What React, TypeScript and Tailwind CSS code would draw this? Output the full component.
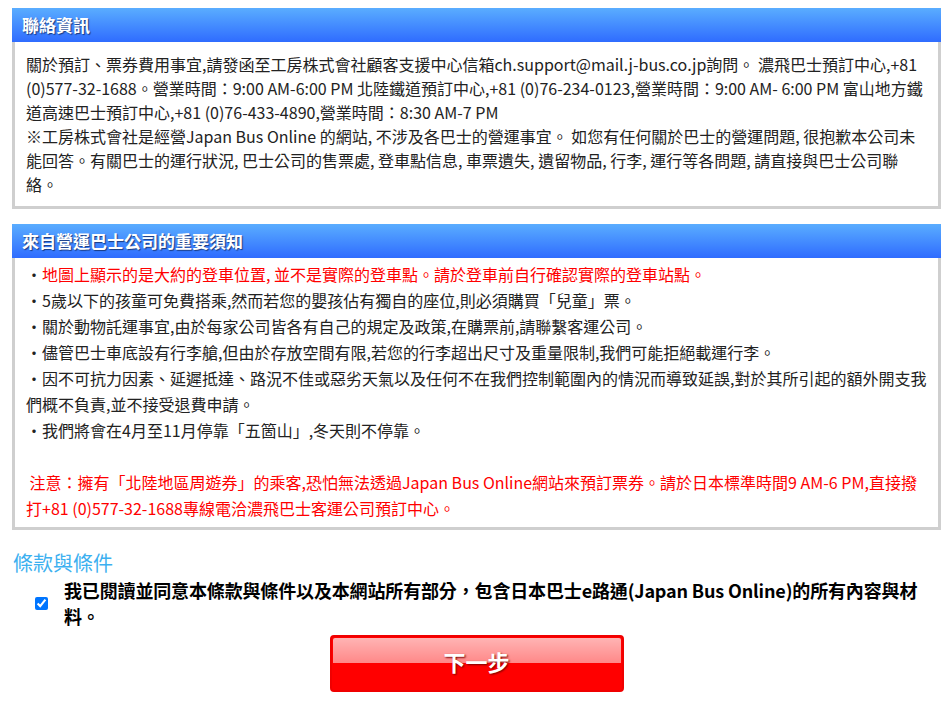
import React from 'react'

const font = { fontFamily: '"Noto Sans CJK TC", "Noto Sans", sans-serif' }

function PanelHeader({ children }: { children: React.ReactNode }) {
  return (
    <div className="h-[34px] flex items-center pl-[10px] bg-[linear-gradient(to_bottom,#5aadff,#2f6cff)] text-white font-bold text-[17px] [text-shadow:1px_1px_1px_#1a3a80]">
      {children}
    </div>
  )
}

const notices = [
  { text: '地圖上顯示的是大約的登車位置, 並不是實際的登車點。請於登車前自行確認實際的登車站點。', red: true },
  { text: '5歲以下的孩童可免費搭乘,然而若您的嬰孩佔有獨自的座位,則必須購買「兒童」票。' },
  { text: '關於動物託運事宜,由於每家公司皆各有自己的規定及政策,在購票前,請聯繫客運公司。' },
  { text: '儘管巴士車底設有行李艙,但由於存放空間有限,若您的行李超出尺寸及重量限制,我們可能拒絕載運行李。' },
  { text: '因不可抗力因素、延遲抵達、路況不佳或惡劣天氣以及任何不在我們控制範圍內的情況而導致延誤,對於其所引起的額外開支我們概不負責,並不接受退費申請。' },
  { text: '我們將會在4月至11月停靠「五箇山」,冬天則不停靠。' },
]

export default function App() {
  return (
    <div className="min-h-screen bg-white pl-[12px] pr-[4px] pt-[8px] pb-4 text-[#222]" style={font}>
      {/* 聯絡資訊 */}
      <div>
        <PanelHeader>聯絡資訊</PanelHeader>
        <div className="border-x-[3px] border-b-[3px] border-[#cfcfcf] pl-[11px] pr-[8px] pt-[10px] pb-[10px] text-[16px] leading-[24px]">
          關於預訂、票券費用事宜,請發函至工房株式會社顧客支援中心信箱ch.support@mail.j-bus.co.jp詢問。 濃飛巴士預訂中心,+81 (0)577-32-1688。營業時間：9:00 AM-6:00 PM 北陸鐵道預訂中心,+81 (0)76-234-0123,營業時間：9:00 AM- 6:00 PM 富山地方鐵道高速巴士預訂中心,+81 (0)76-433-4890,營業時間：8:30 AM-7 PM
          <br />
          ※工房株式會社是經營Japan Bus Online 的網站, 不涉及各巴士的營運事宜。 如您有任何關於巴士的營運問題, 很抱歉本公司未能回答。有關巴士的運行狀況, 巴士公司的售票處, 登車點信息, 車票遺失, 遺留物品, 行李, 運行等各問題, 請直接與巴士公司聯絡。
        </div>
      </div>

      {/* 重要須知 */}
      <div className="mt-[15px]">
        <PanelHeader>來自營運巴士公司的重要須知</PanelHeader>
        <div className="border-x-[3px] border-b-[3px] border-[#cfcfcf] pl-[11px] pr-[8px] pt-[3px] pb-[6px] text-[16px] leading-[26px]">
          {notices.map((n, i) => (
            <p key={i}>
              ・<span className={n.red ? 'text-[#ff0000]' : ''}>{n.text}</span>
            </p>
          ))}
          <div className="h-[26px]" />
          <p className="text-[#ff0000]">
            &nbsp;注意：擁有「北陸地區周遊券」的乘客,恐怕無法透過Japan Bus Online網站來預訂票券。請於日本標準時間9 AM-6 PM,直接撥打+81 (0)577-32-1688專線電洽濃飛巴士客運公司預訂中心。
          </p>
        </div>
      </div>

      {/* 條款與條件 */}
      <h2 className="mt-[19px] text-[20px] leading-[28px] text-[#3cb0f0] pl-[1px]">條款與條件</h2>
      <label className="flex items-center pl-[23px] pr-[10px]">
        <input type="checkbox" defaultChecked className="w-[13px] h-[13px] shrink-0 accent-[#0075ff]" />
        <span className="ml-[16px] text-[18px] leading-[26px] font-bold tracking-[-0.15px] text-black">
          我已閱讀並同意本條款與條件以及本網站所有部分，包含日本巴士e路通(Japan Bus Online)的所有內容與材料。
        </span>
      </label>

      <div className="flex justify-center mt-[6px]">
        <button className="relative w-[294px] h-[57px] rounded-[4px] border-[2px] border-[#f00000] bg-[#ff0000] text-white font-bold text-[22px] [text-shadow:1px_1px_2px_#7a0000]">
          <span className="absolute left-[1px] right-[1px] top-[1px] h-[25px] rounded-t-[2px] bg-[linear-gradient(to_bottom,#ffb4b4,#ff8888)]" />
          <span className="relative -top-[2px]">下一步</span>
        </button>
      </div>
    </div>
  )
}
